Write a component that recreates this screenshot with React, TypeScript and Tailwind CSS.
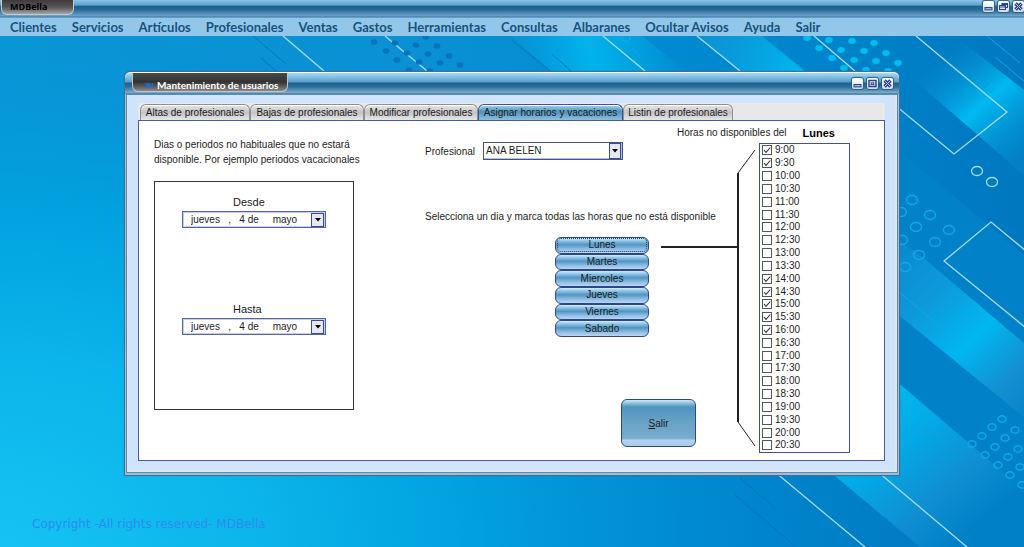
import React, { useState } from "react";
import clsx from "clsx";

const menuItems = [
  "Clientes", "Servicios", "Artículos", "Profesionales", "Ventas", "Gastos",
  "Herramientas", "Consultas", "Albaranes", "Ocultar Avisos", "Ayuda", "Salir",
];

const tabs = [
  { label: "Altas de profesionales", width: "w-[110px]" },
  { label: "Bajas de profesionales", width: "w-[114px]" },
  { label: "Modificar profesionales", width: "w-[114px]" },
  { label: "Asignar horarios y vacaciones", width: "w-[145px]" },
  { label: "Listin de profesionales", width: "w-[110px]" },
];

const days = ["Lunes", "Martes", "Miercoles", "Jueves", "Viernes", "Sabado"];

// 9:00 to 20:30 every half hour
const hours = Array.from({ length: 24 }, (_, i) => `${9 + Math.floor(i / 2)}:${i % 2 ? "30" : "00"}`);

const lightDots = [
  [807, 38], [829, 40], [852, 41], [874, 43], [819, 48], [841, 50], [864, 51], [886, 53],
  [832, 58], [854, 60], [876, 61], [898, 63], [844, 68], [866, 70], [888, 71],
];
const darkDots = [
  [374, 42], [386, 51], [397, 60], [409, 70], [395, 43], [407, 53], [419, 62], [430, 71],
  [416, 45], [428, 54], [440, 63], [426, 37], [437, 46], [449, 56], [460, 65],
];
const midRings = [
  [912, 200], [930, 215], [916, 227], [949, 230], [935, 242], [919, 255], [905, 267], [901, 212], [902, 240],
];
const smallRings = [
  [1002, 419], [992, 427], [1015, 430], [982, 436], [1005, 438], [1018, 449], [972, 444], [995, 447],
  [1008, 457], [985, 455], [1020, 467], [998, 465], [1010, 475], [1022, 485],
  [626, 38], [591, 45], [577, 36],
];

function Wallpaper() {
  return (
    <svg
      className="absolute inset-0 h-full w-full"
      viewBox="0 0 1024 547"
      preserveAspectRatio="xMidYMid slice"
      aria-hidden="true"
    >
      <defs>
        <linearGradient id="base" gradientUnits="userSpaceOnUse" x1="0" y1="60" x2="1024" y2="160">
          <stop offset="0" stopColor="#0c95d6" />
          <stop offset="0.4" stopColor="#0a90d4" />
          <stop offset="0.7" stopColor="#0089cf" />
          <stop offset="1" stopColor="#0078c0" />
        </linearGradient>
        <radialGradient id="glow" gradientUnits="userSpaceOnUse" cx="0" cy="547" r="760" gradientTransform="translate(0 150) scale(1 0.73)">
          <stop offset="0" stopColor="#16c3f4" />
          <stop offset="0.35" stopColor="#0bb4ea" />
          <stop offset="0.6" stopColor="#00a5e1" stopOpacity="0.9" />
          <stop offset="1" stopColor="#008fd3" stopOpacity="0" />
        </radialGradient>
        <linearGradient id="topBand" gradientUnits="userSpaceOnUse" x1="530" y1="60" x2="680" y2="30">
          <stop offset="0" stopColor="#0696d8" />
          <stop offset="0.4" stopColor="#00b3ec" />
          <stop offset="1" stopColor="#00b3ec" stopOpacity="0" />
        </linearGradient>
        <linearGradient id="topBand2" gradientUnits="userSpaceOnUse" x1="700" y1="40" x2="800" y2="75">
          <stop offset="0" stopColor="#1296d8" stopOpacity="0.6" />
          <stop offset="1" stopColor="#00b7ef" />
        </linearGradient>
        <linearGradient id="bandB" gradientUnits="userSpaceOnUse" x1="945" y1="50" x2="1030" y2="150">
          <stop offset="0" stopColor="#0a8fd3" stopOpacity="0" />
          <stop offset="0.5" stopColor="#00b9f0" />
          <stop offset="1" stopColor="#0a8fd3" stopOpacity="0.3" />
        </linearGradient>
        <linearGradient id="bandC" gradientUnits="userSpaceOnUse" x1="890" y1="260" x2="1030" y2="400">
          <stop offset="0" stopColor="#0a8ad0" />
          <stop offset="0.3" stopColor="#0d9bdc" />
          <stop offset="0.58" stopColor="#00b7ef" />
          <stop offset="0.85" stopColor="#148fd2" />
          <stop offset="1" stopColor="#0a86cc" />
        </linearGradient>
        <linearGradient id="bandD" gradientUnits="userSpaceOnUse" x1="850" y1="410" x2="960" y2="540">
          <stop offset="0" stopColor="#00baf1" />
          <stop offset="0.35" stopColor="#03aae6" />
          <stop offset="0.7" stopColor="#108fd3" />
          <stop offset="1" stopColor="#0080c7" />
        </linearGradient>
      </defs>
      <rect width="1024" height="547" fill="url(#base)" />
      <rect width="1024" height="547" fill="url(#glow)" />
      <path d="M505 30 555 75H690L635 30Z" fill="url(#topBand)" />
      <path d="M690 30 745 75H810L755 30Z" fill="url(#topBand2)" />
      <path d="M755 30 1024 255V547H930L700 350 812 78Z" fill="#0081c8" />
      <path d="M955 36 1024 90V176L1003 157 905 72Z" fill="url(#bandB)" />
      <path d="M880 227 920 255 1024 343V417L880 300Z" fill="url(#bandC)" />
      <path d="M835 476 800 447 860 350 1024 490V547H920Z" fill="url(#bandD)" />
      <g fill="none" stroke="#a6dcea" strokeWidth="1.3">
        <path d="M283 36 324 71M385 36 427 71M603 36 645 71M697 36 740 71M814 36 855 71" />
        <path d="M916 36 1007 112 954 154 890 101M1026 251 991 222 944 261 1026 328" />
        <path d="M775 472 865 547M878 472 967 547" />
        <ellipse cx="977" cy="171" rx="5.5" ry="4.5" />
        <ellipse cx="992" cy="182" rx="5.5" ry="4.5" />
      </g>
      <g stroke="#0575bd" strokeWidth="1">
        <path d="M253 36 286 64M261 58 276 71M740 478 775 508M735 495 795 546M512 40 550 71M552 54 571 71" />
      </g>
      <g stroke="#18a4e4" strokeWidth="1">
        <path d="M987 36 1020 63M995 57 1024 81M899 292 948 333" />
      </g>
      <g fill="#00bdf0">
        {lightDots.map(([x, y]) => <ellipse key={`${x}-${y}`} cx={x} cy={y} rx="3.8" ry="3" />)}
      </g>
      <g fill="#0674bd">
        {darkDots.map(([x, y]) => <ellipse key={`${x}-${y}`} cx={x} cy={y} rx="3.4" ry="2.8" />)}
      </g>
      <g fill="none" stroke="#14a9e4" strokeWidth="1.4">
        {midRings.map(([x, y]) => <ellipse key={`${x}-${y}`} cx={x} cy={y} rx="5.5" ry="4.5" />)}
        {smallRings.map(([x, y]) => <ellipse key={`${x}-${y}`} cx={x} cy={y} rx="4" ry="3.2" />)}
      </g>
    </svg>
  );
}

function WindowControls({ restore = false }: { restore?: boolean }) {
  const box =
    "flex size-[11px] items-center justify-center rounded-[2px] bg-gradient-to-b from-white to-[#d3dbe8] shadow-[0_0_1px_1px_#2b5f86]";
  return (
    <div className="flex gap-1">
      <button className={box} aria-label="Minimizar">
        <svg viewBox="0 0 11 11" className="size-[11px]">
          <rect x="2" y="6.5" width="7" height="2.4" fill="#9db4dc" stroke="#25458f" strokeWidth="1" />
        </svg>
      </button>
      <button className={box} aria-label={restore ? "Restaurar" : "Maximizar"}>
        <svg viewBox="0 0 11 11" className="size-[11px]" fill="none" stroke="#25458f">
          {restore ? (
            <path d="M4 4.500V2.500H9.500V6.500H8M1.500 4.500H7.500V8.500H1.500ZM1.500 6H7.500M4 3.500H9" strokeWidth="1.100" />
          ) : (
            <>
              <rect x="2" y="2.500" width="7" height="6" strokeWidth="1.500" />
              <rect x="4.200" y="4.800" width="2.600" height="1.800" strokeWidth="1" />
            </>
          )}
        </svg>
      </button>
      <button className={box} aria-label="Cerrar">
        <svg viewBox="0 0 11 11" className="size-[11px]">
          <path d="M2.500 2.500 8.500 8.500M8.500 2.500 2.500 8.500" stroke="#25458f" strokeWidth="3.400" />
          <path d="M2.500 2.500 8.500 8.500M8.500 2.500 2.500 8.500" stroke="#b9c9e8" strokeWidth="1" />
        </svg>
      </button>
    </div>
  );
}

function DateField({ id, label }: { id: string; label: string }) {
  return (
    <div className="w-[144px]">
      <label htmlFor={id} className="block pl-[51px] text-[11px] leading-4">{label}</label>
      <div className="mt-px flex h-[17px] items-center border border-[#5566a8] bg-white pr-px shadow-[inset_0_0_0_1px_#c5cdea]">
        <input
          id={id}
          type="text"
          className="min-w-0 flex-1 bg-transparent pl-2 text-[10px] outline-none"
          defaultValue={"jueves   ,   4 de     mayo"}
        />
        <button
          className="flex h-[14px] w-[13px] items-center justify-center border border-[#3b4a92] bg-[#e6e8f0]"
          aria-label={`Abrir calendario ${label}`}
        >
          <Arrow />
        </button>
      </div>
    </div>
  );
}

function Arrow() {
  return (
    <svg viewBox="0 0 6 4" className="h-1 w-1.5">
      <path d="M0 0H6L3 3.500Z" fill="#000" />
    </svg>
  );
}

export default function App() {
  const [tab, setTab] = useState(3);
  const [day, setDay] = useState("Lunes");
  const [busy, setBusy] = useState(["9:00", "9:30", "14:00", "14:30", "15:00", "15:30", "16:00"]);

  const toggleHour = (hour: string) => {
    setBusy(busy.includes(hour) ? busy.filter((h) => h !== hour) : [...busy, hour]);
  };

  return (
    <div className="relative flex min-h-screen flex-col overflow-hidden bg-[#0a90d4] font-['Liberation_Sans',sans-serif] text-[10px] text-[#1c1c1c]">
      <Wallpaper />

      <header className="relative">
        <div className="flex h-[18px] items-start justify-between bg-[linear-gradient(#8cc6ea_0%,#5da0c8_28%,#1d628f_36%,#2a6c99_55%,#6ea3c8_88%,#3f7ca8_94%,#7fb4d8_100%)]">
          <h1 className="ml-px h-[15px] w-[73px] rounded-b-md border border-t-0 border-[#c9c9c9] bg-gradient-to-b from-[#3c3c3c] via-[#555] to-[#a5a5a5] pl-2 font-['Open_Sans',sans-serif] text-[9px] leading-[14px] font-bold text-black">
            MDBella
          </h1>
          <div className="pt-px">
            <WindowControls restore />
          </div>
        </div>
        <nav className="flex h-[18px] items-center gap-[15px] bg-[#93c7e9] pl-2.5 font-['Lato',sans-serif] text-[13px] leading-[18px] font-bold whitespace-nowrap text-[#17527e]">
          {menuItems.map((item) => (
            <button key={item}>{item}</button>
          ))}
        </nav>
      </header>

      <main className="relative mx-[124px] mt-[35px] rounded-t-md border border-[#456f93] bg-[#9dbdd6] shadow-[0_0_1px_#2f6a94]">
        <div className="flex h-[22px] items-start justify-between rounded-t-md border-t border-white bg-[linear-gradient(#a5d8f6_0%,#5ca0c9_42%,#1d628f_48%,#2b6d9a_65%,#78aace_93%,#3f739c_100%)] pr-1.5">
          <h2 className="ml-[7px] flex h-[19px] w-[156px] items-center rounded-b-md border border-t-0 border-[#c4c4c4] bg-gradient-to-b from-[#4a4a4a] via-[#333] to-[#8a8a8a] pt-1.5 pl-3 font-['Lato',sans-serif] text-[10px] leading-3 font-bold whitespace-nowrap text-white">
            <svg viewBox="0 0 8 6" className="mr-1 h-1.5 w-2 shrink-0" fill="none" stroke="#1c6fd0" strokeWidth="1.300">
              <path d="M0.500 1 2 5 3 1 4 5M5 1V4.500H7.500V1" />
            </svg>
            Mantenimiento de usuarios
          </h2>
          <div className="pt-[5px]">
            <WindowControls />
          </div>
        </div>

        <div className="mx-px mb-0.5 border border-[#5a8db3] bg-[#e4e4e4] pr-0.5 pb-0.5 pl-px">
          <div className="bg-[#cfe3fa] pt-2 pr-2.5 pb-[9px] pl-2.5">
            <div role="tablist" className="flex h-[17px] items-end bg-[#e8e8e8] pt-px pl-0.5">
              {tabs.map(({ label, width }, i) => (
                <button
                  key={label}
                  role="tab"
                  aria-selected={tab === i}
                  onClick={() => setTab(i)}
                  className={clsx(
                    "h-4 rounded-t-md border border-b-0 pt-px leading-[14px] whitespace-nowrap shadow-[inset_0_1px_0_#fff]",
                    width,
                    tab === i
                      ? "border-[#3d4f98] bg-[linear-gradient(#a6d2ef,#4e93bd_45%,#8dbfe0)]"
                      : "border-[#8f8f8f] bg-[linear-gradient(#e6e6e6,#c4c4c4_50%,#e6e6e6)]",
                  )}
                >
                  {label}
                </button>
              ))}
            </div>

            <section className="flex justify-between border border-[#4a5aa0] bg-white pr-[34px] pb-[7px] pl-[15px]">
              <div className="pt-4">
                <p className="w-[220px] leading-[15px]">
                  Dias o periodos no habituales que no estará disponible. Por ejemplo periodos vacacionales
                </p>
                <div className="mt-3.5 flex h-[229px] w-[200px] flex-col gap-[73px] border border-[#333] pt-3 pl-[27px]">
                  <DateField id="desde" label="Desde" />
                  <DateField id="hasta" label="Hasta" />
                </div>
              </div>

              <div className="flex">
                <div className="w-[312px] pt-[21px]">
                  <div className="flex h-[18px] items-center">
                    <label htmlFor="profesional" className="w-[58px]">Profesional</label>
                    <div className="relative">
                      <select
                        id="profesional"
                        className="h-[18px] w-[140px] appearance-none border border-[#3f509a] bg-white pl-0.5 text-[10px] leading-4 shadow-[inset_-1px_-1px_0_#b4bfe4]"
                      >
                        <option>ANA BELEN</option>
                      </select>
                      <span className="pointer-events-none absolute top-px right-0.5 flex h-4 w-3 items-center justify-center border border-[#3b4a92] bg-[#e6e8f0]">
                        <Arrow />
                      </span>
                    </div>
                  </div>
                  <p className="mt-[49px] leading-4 whitespace-nowrap">
                    Selecciona un dia y marca todas las horas que no está disponible
                  </p>
                  <div className="mt-3 ml-[130px] flex h-[100px] w-[94px] flex-col">
                    {days.map((d) => (
                      <button
                        key={d}
                        onClick={() => setDay(d)}
                        className="min-h-0 flex-1 rounded-md border border-[#2f4590] bg-[linear-gradient(#d5ecfb_0%,#8cc3e6_20%,#5195c2_45%,#8fbfe4_75%,#b9d6f2_100%)] px-px leading-3"
                      >
                        <span className={clsx("block rounded-sm border", day === d ? "border-dotted border-[#24405f]" : "border-transparent")}>
                          {d}
                        </span>
                      </button>
                    ))}
                  </div>
                  <button className="mt-[62px] ml-[196px] h-12 w-[75px] rounded-md border border-[#2b4a8c] bg-[linear-gradient(#cfe8f8_0%,#4e94bd_15%,#6aa3c7_50%,#78aacb_83%,#b5d3f0_88%,#a9c9ec_100%)]">
                    <u>S</u>alir
                  </button>
                </div>

                <div className="pointer-events-none -ml-[76px] pt-1">
                  <h3 className="flex items-center gap-3 pl-4 leading-4 font-normal">
                    Horas no disponibles del <b className="pl-1 text-[11px] text-black">{day}</b>
                  </h3>
                  <div className="mt-0.5 flex">
                    <svg viewBox="0 0 98 310" className="h-[310px] w-[98px]" fill="none" stroke="#222">
                      <path d="M0 104H77M77 30V279" strokeWidth="2" />
                      <path d="M77 30 94 7M77 279 94 303" strokeWidth="1" />
                    </svg>
                    <ul className="pointer-events-auto flex h-[310px] w-[91px] flex-col border border-[#3f509a] bg-white pl-0.5">
                      {hours.map((hour) => (
                        <li key={hour} className="flex flex-1 items-center">
                          <label className="flex items-center gap-[3px] leading-3">
                            <span className="grid size-2.5 place-items-center">
                              <input
                                type="checkbox"
                                checked={busy.includes(hour)}
                                onChange={() => toggleHour(hour)}
                                className="col-start-1 row-start-1 size-2.5 appearance-none border border-[#555] bg-white"
                              />
                              {busy.includes(hour) && (
                                <svg viewBox="0 0 10 10" className="pointer-events-none col-start-1 row-start-1 size-2.5">
                                  <path d="M2 5 4 7.300 8.300 2.500" fill="none" stroke="#333" strokeWidth="1.100" />
                                </svg>
                              )}
                            </span>
                            {hour}
                          </label>
                        </li>
                      ))}
                    </ul>
                  </div>
                </div>
              </div>
            </section>
          </div>
        </div>
      </main>

      <footer className="relative mt-auto pt-6 pb-4 pl-8 font-['DejaVu_Sans',sans-serif] text-[12px] leading-3.5 text-[#2a8cf2]">
        Copyright -All rights reserved- MDBella
      </footer>
    </div>
  );
}
